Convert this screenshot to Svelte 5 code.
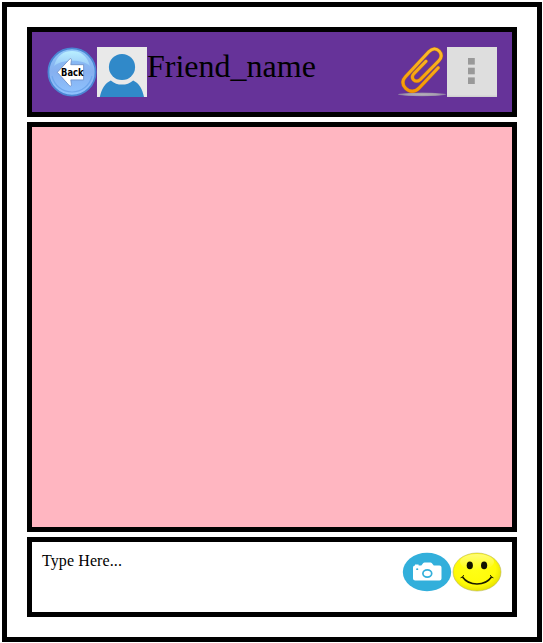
<script>
  let friend = 'Friend_name';
  let prompt = 'Type Here...';
</script>

<main class="phone">
  <header class="bar">
    <svg class="icon" viewBox="0 0 50 50" aria-label="Back">
      <defs>
        <linearGradient id="ball" x1="0" y1="0" x2="0" y2="1">
          <stop offset="0" stop-color="#8fc6f8" />
          <stop offset="0.5" stop-color="#86b0f0" />
          <stop offset="1" stop-color="#8fc4ff" />
        </linearGradient>
        <linearGradient id="shine" x1="0" y1="0" x2="0" y2="1">
          <stop offset="0" stop-color="#b9efff" />
          <stop offset="1" stop-color="#9acbf8" />
        </linearGradient>
      </defs>
      <circle cx="25" cy="25" r="23.6" fill="url(#ball)" stroke="#4b86d4" stroke-width="1.8" />
      <path d="M7 19C10 8 17 4 25 4s15 4 18 15C36 12 15 12 7 19Z" fill="url(#shine)" />
      <path d="M5 29a20.5 20.5 0 0 0 40 0" fill="none" stroke="#70a7ed" stroke-width="1.2" />
      <path d="M10.3 25.3 22.5 12.2q2.1-1.6 1.9 1.2l-.6 4.3h12.8v15.2H23.8l.6 4.5q0 2.8-2.1 1.2Z" fill="#fff" stroke="#688ac3" stroke-width=".8" />
      <text x="25.3" y="29" text-anchor="middle" textLength="22.4" lengthAdjust="spacingAndGlyphs" class="back-label">Back</text>
    </svg>
    <svg class="icon" viewBox="0 0 50 50" aria-label="Friend">
      <rect width="50" height="50" fill="#e9e9e9" />
      <circle cx="25" cy="20" r="13.1" fill="#3089c9" />
      <path d="M2.8 50C4.5 42 8 36 13.8 33.4 20 39 30 39 36.2 33.4 42 36 45.5 42 47 50Z" fill="#3089c9" />
    </svg>
    <span class="name">{friend}</span>
    <svg class="icon" viewBox="0 0 50 50" aria-label="Attach">
      <defs>
        <radialGradient id="shadow">
          <stop offset="0" stop-color="#b5afba" />
          <stop offset="0.65" stop-color="#a69eb0" />
          <stop offset="1" stop-color="#8b78a3" />
        </radialGradient>
        <linearGradient id="clip" x1="0" y1="0" x2="0" y2="1">
          <stop offset="0" stop-color="#fdbd2c" />
          <stop offset="1" stop-color="#f59700" />
        </linearGradient>
      </defs>
      <ellipse cx="25" cy="47.4" rx="24" ry="1.8" fill="url(#shadow)" />
      <path d="M41.2 20.8 22.4 40.8C18 45.5 12.5 45.2 8.6 41.2 5 37.4 5.2 33.2 8.5 29.8L31.8 4.8C35.5 1 39.2 1 42.2 4.1 45.3 7.5 44.8 10.7 41.6 14L23.4 32.4C20.8 34.9 18.3 34.6 16.5 32.7 14.7 30.7 15.1 28.6 17.1 26.4L29 14.2" fill="none" stroke="#b56c25" stroke-width="3.7" stroke-linecap="round" />
      <path d="M41.2 20.8 22.4 40.8C18 45.5 12.5 45.2 8.6 41.2 5 37.4 5.2 33.2 8.5 29.8L31.8 4.8C35.5 1 39.2 1 42.2 4.1 45.3 7.5 44.8 10.7 41.6 14L23.4 32.4C20.8 34.9 18.3 34.6 16.5 32.7 14.7 30.7 15.1 28.6 17.1 26.4L29 14.2" fill="none" stroke="url(#clip)" stroke-width="2.8" stroke-linecap="round" />
    </svg>
    <svg class="icon" viewBox="0 0 50 50" aria-label="Menu">
      <rect width="50" height="50" fill="#dedede" />
      <rect y="48.5" width="50" height="1.5" fill="#d2d2d2" />
      {#each [11, 20.7, 30.4] as y}
        <rect x="21" {y} width="6.8" height="6.6" fill="#999" />
      {/each}
    </svg>
  </header>

  <section class="chat"></section>

  <footer class="composer">
    <span class="prompt">{prompt}</span>
    <svg class="small" viewBox="0 0 50 40" aria-label="Camera">
      <ellipse cx="25" cy="20" rx="24.2" ry="19.2" fill="#32afdb" />
      <path d="M13 13.4v-.8h3.6v.8h2.7l2-2.4q.4-.5 1.2-.5h6q.8 0 1.2.5l2.1 2.4h5.7q2 0 2 2v11.2q0 2-2 2H13.2q-2.2 0-2.2-2V15.4q0-1.8 2-2Z" fill="#fff" />
      <ellipse cx="25.3" cy="21.5" rx="4.4" ry="3.6" fill="none" stroke="#32afdb" stroke-width="1.7" />
      <ellipse cx="15.2" cy="17.2" rx="1.1" ry=".9" fill="#32afdb" />
    </svg>
    <svg class="small" viewBox="0 0 50 40" aria-label="Smiley">
      <defs>
        <radialGradient id="face" cx=".46" cy=".43" r=".57">
          <stop offset="0" stop-color="#ffff16" />
          <stop offset="0.75" stop-color="#fffb08" />
          <stop offset="1" stop-color="#e8e300" />
        </radialGradient>
        <linearGradient id="glow" x1="0" y1="0" x2="0" y2="1">
          <stop offset="0" stop-color="#fff" stop-opacity=".45" />
          <stop offset="1" stop-color="#fff" stop-opacity="0" />
        </linearGradient>
      </defs>
      <ellipse cx="25" cy="20" rx="24" ry="19" fill="url(#face)" stroke="#b9b65a" stroke-width=".6" />
      <ellipse cx="25" cy="10" rx="17" ry="8" fill="url(#glow)" />
      <ellipse cx="17.8" cy="13.4" rx="3.1" ry="3.8" fill="#111100" />
      <ellipse cx="32.1" cy="13.4" rx="3.1" ry="3.8" fill="#111100" />
      <path d="M10.5 25C17 34.3 33 34.3 39.5 25" fill="none" stroke="#191900" stroke-width="1.6" />
      <path d="M8.6 25.8q2.3-.4 3.1-2.7M38.3 23.1q.8 2.3 3.1 2.7" fill="none" stroke="#191900" stroke-width="1" />
    </svg>
  </footer>
</main>

<style>
  :global(body) {
    background: #fff;
  }
  .phone {
    box-sizing: border-box;
    width: 540px;
    height: 640px;
    margin: 2px 0 0 2px;
    padding: 20px;
    border: 5px solid #000;
    display: flex;
    flex-direction: column;
    gap: 5px;
    color: #000;
    font-family: 'Liberation Serif', 'Times New Roman', serif;
  }
  .bar,
  .chat,
  .composer {
    box-sizing: border-box;
    border: 5px solid #000;
  }
  .bar {
    height: 90px;
    padding: 15px;
    display: flex;
    align-items: flex-start;
    background: #663399;
  }
  .icon {
    width: 50px;
    height: 50px;
    flex: none;
  }
  .back-label {
    font: bold 10.5px 'DejaVu Sans', sans-serif;
    fill: #000;
  }
  .name {
    flex: 1;
    font-size: 32px;
    line-height: 38px;
  }
  .chat {
    flex: 1;
    background: #ffb6c1;
  }
  .composer {
    height: 80px;
    padding: 10px;
    display: flex;
    align-items: flex-start;
    background: #fff;
  }
  .prompt {
    flex: 1;
    font-size: 16px;
    line-height: 18px;
    letter-spacing: 0.1px;
  }
  .small {
    width: 50px;
    height: 40px;
    flex: none;
  }
</style>
